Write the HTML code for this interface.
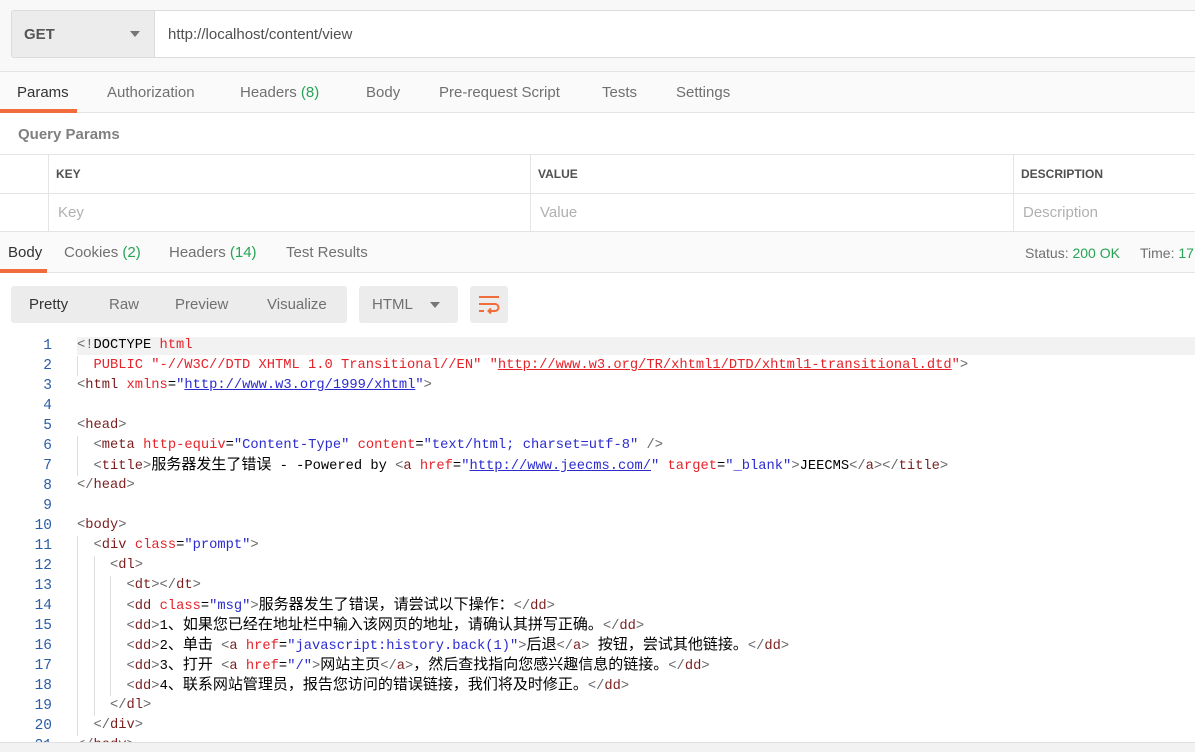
<!DOCTYPE html>
<html><head><meta charset="utf-8"><style>
*{box-sizing:border-box;margin:0;padding:0}
html,body{width:1195px;height:752px;overflow:hidden}
body{background:#fff;font-family:"Liberation Sans","Noto Sans CJK SC",sans-serif;color:#505050;position:relative}
.abs{position:absolute}
.top{left:0;top:0;width:1195px;height:72px;background:#f8f8f8;border-bottom:1px solid #e4e4e4}
.get{left:11px;top:10px;width:144px;height:48px;background:#ececec;border:1px solid #dcdcdc;border-radius:3px 0 0 3px;font-size:15px;font-weight:bold;color:#555;padding:15px 0 0 12px}
.url{left:154px;top:10px;width:1045px;height:48px;background:#fff;border:1px solid #dcdcdc;font-size:15px;color:#505050;padding:15px 0 0 13px}
.tabs{left:0;top:72px;width:1195px;height:41px;background:#fafafa;border-bottom:1px solid #e4e4e4;font-size:15px}
.tabs span,.rt span{position:absolute;top:12px;color:#707070}
.g{color:#26a354}
.qp{left:18px;top:126px;font-size:15px;font-weight:bold;color:#808080}
.tbl{left:0;top:154px;width:1195px;height:78px;border-top:1px solid #e4e4e4;border-bottom:1px solid #e4e4e4}
.tbl .r{position:absolute;left:0;top:38px;width:1195px;border-top:1px solid #e4e4e4}
.tbl .c{position:absolute;top:0;height:78px;border-left:1px solid #e4e4e4}
.th{position:absolute;top:12px;font-size:12px;font-weight:bold;color:#505050}
.ph{position:absolute;top:49px;font-size:15px;color:#b0b0b0}
.rt{left:0;top:232px;width:1195px;height:41px;background:#fafafa;border-bottom:1px solid #e4e4e4;font-size:15px}
.btns{left:11px;top:286px;width:336px;height:37px;background:#ececec;border-radius:3px;font-size:15px}
.btns span{position:absolute;top:10px;color:#707070}
.html{left:359px;top:286px;width:99px;height:37px;background:#ececec;border-radius:3px;font-size:15px;color:#707070;padding:10px 0 0 13px}
.wrap{left:470px;top:286px;width:38px;height:37px;background:#ececec;border-radius:3px}
.code{left:0;top:336px;width:1195px;font-family:"Liberation Mono","Noto Sans CJK SC",monospace;font-size:13.75px;color:#000}
.ln{height:20px;line-height:20px;position:relative}
.ln b{font-weight:normal;position:absolute;left:0;width:52px;text-align:right;color:#2a5da8;font-size:14.5px}
.ln i{font-style:normal;position:absolute;left:77px;white-space:pre}
.z{font-size:15px}
.t{color:#7a1e1e}.p{color:#666}.a{color:#e5232a}.v{color:#2b2bd0}.u{text-decoration:underline}
.guide{position:absolute;width:1px;background:#ddd}
</style></head><body>
<div class="abs top"></div>
<div class="abs get">GET<svg class="abs" style="left:118px;top:20px" width="10" height="6"><path d="M0 0H10L5 6Z" fill="#777"/></svg></div>
<div class="abs url">http://localhost/content/view</div>
<div class="abs tabs">
<span style="left:17px;color:#333">Params</span><span style="left:107px">Authorization</span><span style="left:240px">Headers <i class="g" style="font-style:normal">(8)</i></span><span style="left:366px">Body</span><span style="left:439px">Pre-request Script</span><span style="left:602px">Tests</span><span style="left:676px">Settings</span>
<div class="abs" style="left:0;top:37px;width:77px;height:4px;background:#f26b3a"></div></div>
<div class="abs qp">Query Params</div>
<div class="abs tbl"><div class="r"></div><div class="c" style="left:48px"></div><div class="c" style="left:530px"></div><div class="c" style="left:1013px"></div>
<span class="th" style="left:56px">KEY</span><span class="th" style="left:538px">VALUE</span><span class="th" style="left:1021px">DESCRIPTION</span>
<span class="ph" style="left:58px">Key</span><span class="ph" style="left:540px">Value</span><span class="ph" style="left:1023px">Description</span></div>
<div class="abs rt">
<span style="left:8px;color:#333">Body</span><span style="left:64px">Cookies <i class="g" style="font-style:normal">(2)</i></span><span style="left:169px">Headers <i class="g" style="font-style:normal">(14)</i></span><span style="left:286px">Test Results</span>
<span style="left:1025px;font-size:14px;top:13px">Status: <i class="g" style="font-style:normal">200 OK</i></span><span style="left:1140px;font-size:14px;top:13px">Time: <i class="g" style="font-style:normal">17</i></span>
<div class="abs" style="left:0;top:37px;width:47px;height:4px;background:#f26b3a"></div></div>
<div class="abs btns"><span style="left:18px;color:#333">Pretty</span><span style="left:98px">Raw</span><span style="left:164px">Preview</span><span style="left:256px">Visualize</span></div>
<div class="abs html">HTML<svg class="abs" style="left:71px;top:16px" width="10" height="6"><path d="M0 0H10L5 6Z" fill="#777"/></svg></div>
<div class="abs wrap"><svg width="38" height="37"><path d="M9 11H29M9 18H25a3.5 3.5 0 0 1 0 7H19M21 22.5L18.5 25L21 27.5M9 25H14" stroke="#f26b3a" stroke-width="2" fill="none"/></svg></div>
<div class="abs" style="left:77px;top:337px;width:1118px;height:18px;background:#f2f2f2"></div>
<div class="guide" style="left:77px;top:356px;height:20px"></div>
<div class="guide" style="left:77px;top:436px;height:40px"></div>
<div class="guide" style="left:77px;top:536px;height:200px"></div>
<div class="guide" style="left:94px;top:556px;height:160px"></div>
<div class="guide" style="left:110px;top:576px;height:120px"></div>
<div class="abs code">
<div class="ln"><b>1</b><i><span class="p">&lt;!</span>DOCTYPE <span class="a">html</span></i></div>
<div class="ln"><b>2</b><i class="a">  PUBLIC "-//W3C//DTD XHTML 1.0 Transitional//EN" "<span class="u">http://www.w3.org/TR/xhtml1/DTD/xhtml1-transitional.dtd</span>"<span class="p">&gt;</span></i></div>
<div class="ln"><b>3</b><i><span class="p">&lt;</span><span class="t">html</span> <span class="a">xmlns</span>=<span class="v">"<span class="u">http://www.w3.org/1999/xhtml</span>"</span><span class="p">&gt;</span></i></div>
<div class="ln"><b>4</b></div>
<div class="ln"><b>5</b><i><span class="p">&lt;</span><span class="t">head</span><span class="p">&gt;</span></i></div>
<div class="ln"><b>6</b><i>  <span class="p">&lt;</span><span class="t">meta</span> <span class="a">http-equiv</span>=<span class="v">"Content-Type"</span> <span class="a">content</span>=<span class="v">"text/html; charset=utf-8"</span> <span class="p">/&gt;</span></i></div>
<div class="ln"><b>7</b><i>  <span class="p">&lt;</span><span class="t">title</span><span class="p">&gt;</span><span class="z">服务器发生了错误</span> - -Powered by <span class="p">&lt;</span><span class="t">a</span> <span class="a">href</span>=<span class="v">"<span class="u">http://www.jeecms.com/</span>"</span> <span class="a">target</span>=<span class="v">"_blank"</span><span class="p">&gt;</span>JEECMS<span class="p">&lt;/</span><span class="t">a</span><span class="p">&gt;&lt;/</span><span class="t">title</span><span class="p">&gt;</span></i></div>
<div class="ln"><b>8</b><i><span class="p">&lt;/</span><span class="t">head</span><span class="p">&gt;</span></i></div>
<div class="ln"><b>9</b></div>
<div class="ln"><b>10</b><i><span class="p">&lt;</span><span class="t">body</span><span class="p">&gt;</span></i></div>
<div class="ln"><b>11</b><i>  <span class="p">&lt;</span><span class="t">div</span> <span class="a">class</span>=<span class="v">"prompt"</span><span class="p">&gt;</span></i></div>
<div class="ln"><b>12</b><i>    <span class="p">&lt;</span><span class="t">dl</span><span class="p">&gt;</span></i></div>
<div class="ln"><b>13</b><i>      <span class="p">&lt;</span><span class="t">dt</span><span class="p">&gt;&lt;/</span><span class="t">dt</span><span class="p">&gt;</span></i></div>
<div class="ln"><b>14</b><i>      <span class="p">&lt;</span><span class="t">dd</span> <span class="a">class</span>=<span class="v">"msg"</span><span class="p">&gt;</span><span class="z">服务器发生了错误，请尝试以下操作：</span><span class="p">&lt;/</span><span class="t">dd</span><span class="p">&gt;</span></i></div>
<div class="ln"><b>15</b><i>      <span class="p">&lt;</span><span class="t">dd</span><span class="p">&gt;</span>1<span class="z">、如果您已经在地址栏中输入该网页的地址，请确认其拼写正确。</span><span class="p">&lt;/</span><span class="t">dd</span><span class="p">&gt;</span></i></div>
<div class="ln"><b>16</b><i>      <span class="p">&lt;</span><span class="t">dd</span><span class="p">&gt;</span>2<span class="z">、单击</span> <span class="p">&lt;</span><span class="t">a</span> <span class="a">href</span>=<span class="v">"javascript:history.back(1)"</span><span class="p">&gt;</span><span class="z">后退</span><span class="p">&lt;/</span><span class="t">a</span><span class="p">&gt;</span> <span class="z">按钮，尝试其他链接。</span><span class="p">&lt;/</span><span class="t">dd</span><span class="p">&gt;</span></i></div>
<div class="ln"><b>17</b><i>      <span class="p">&lt;</span><span class="t">dd</span><span class="p">&gt;</span>3<span class="z">、打开</span> <span class="p">&lt;</span><span class="t">a</span> <span class="a">href</span>=<span class="v">"/"</span><span class="p">&gt;</span><span class="z">网站主页</span><span class="p">&lt;/</span><span class="t">a</span><span class="p">&gt;</span><span class="z">，然后查找指向您感兴趣信息的链接。</span><span class="p">&lt;/</span><span class="t">dd</span><span class="p">&gt;</span></i></div>
<div class="ln"><b>18</b><i>      <span class="p">&lt;</span><span class="t">dd</span><span class="p">&gt;</span>4<span class="z">、联系网站管理员，报告您访问的错误链接，我们将及时修正。</span><span class="p">&lt;/</span><span class="t">dd</span><span class="p">&gt;</span></i></div>
<div class="ln"><b>19</b><i>    <span class="p">&lt;/</span><span class="t">dl</span><span class="p">&gt;</span></i></div>
<div class="ln"><b>20</b><i>  <span class="p">&lt;/</span><span class="t">div</span><span class="p">&gt;</span></i></div>
<div class="ln"><b>21</b><i><span class="p">&lt;/</span><span class="t">body</span><span class="p">&gt;</span></i></div>
</div>
<div class="abs" style="left:0;top:742px;width:1195px;height:10px;background:#f2f2f2;border-top:1px solid #e0e0e0"></div>
</body></html>
